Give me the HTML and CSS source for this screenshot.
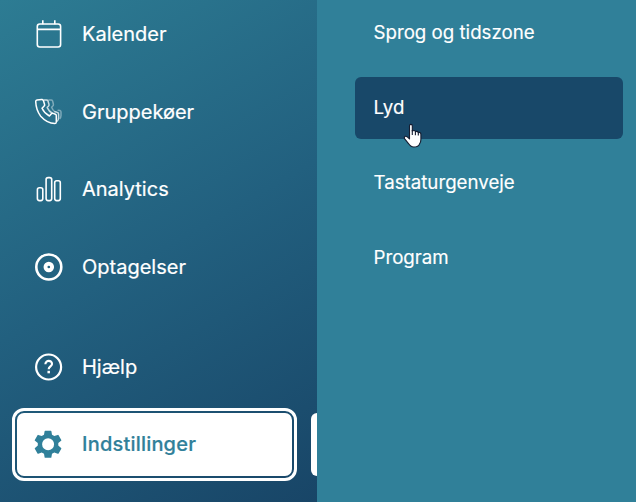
FILE: index.html
```html
<!DOCTYPE html>
<html lang="da">
<head>
<meta charset="utf-8">
<title>Indstillinger</title>
<link rel="stylesheet" href="styles.css">
</head>
<body>
<div class="app">
  <nav class="sidebar">
    <a class="nav-item">
      <svg class="icon" viewBox="0 0 30 30" fill="none" stroke="currentColor" stroke-width="1.6"><rect x="3.3" y="5" width="23.3" height="23" rx="2.5"/><path d="M3.3 10.4h23.3M8.8 1.2v4M20.8 1.2v4"/></svg>
      <span>Kalender</span>
    </a>
    <a class="nav-item">
      <svg class="icon" viewBox="0 0 30 30" fill="none" stroke="currentColor" stroke-width="1.5" stroke-linejoin="round">
        <path opacity=".4" d="M14.3 3H17.2Q18.2 3 18.6 4L19.4 7.3Q19.6 8.5 18.6 9.2L17.6 10.2Q18.8 13.3 21 14.8M23.6 13.2L26.2 13.6Q27 13.9 27 15V18.4Q26.9 21 25.6 22"/>
        <path opacity=".75" d="M9.8 3H12.4Q13.6 3 14 4L15 7.5Q15.2 8.6 14.4 9.3L13.2 10.6Q15 14.5 18.6 16.5M20.5 14.9Q21.4 14.7 23.4 15.4Q24.6 15.7 24.6 17V20.5Q24.5 23.4 23 24.4"/>
        <path d="M3 3L7.6 2.6Q8.9 2.5 9.4 3.6L10.6 7.4Q10.9 8.5 10 9.2L8 11.2Q10.4 16.4 15.4 19L17.4 16.8Q18.1 16 19.2 16.4L21.4 17.3Q22.3 17.7 22.3 18.8V25Q22.2 26.6 20.8 26.6Q13 26.2 6.7 19.2Q2 13 1.7 4.5Q1.7 3.2 3 3Z"/>
      </svg>
      <span>Gruppekøer</span>
    </a>
    <a class="nav-item">
      <svg class="icon" viewBox="0 0 30 30" fill="none" stroke="currentColor" stroke-width="1.6"><rect x="3.4" y="13.8" width="5.4" height="12.8" rx="2"/><rect x="12.1" y="3.6" width="5.6" height="23" rx="2"/><rect x="20.7" y="6.8" width="5.6" height="19.8" rx="2"/></svg>
      <span>Analytics</span>
    </a>
    <a class="nav-item">
      <svg class="icon" viewBox="0 0 30 30" fill="none" stroke="currentColor"><circle cx="14.8" cy="15" r="12.5" stroke-width="2.6"/><circle cx="14.8" cy="15" r="3.3" stroke-width="3.9"/></svg>
      <span>Optagelser</span>
    </a>
    <a class="nav-item nav-item-help">
      <svg class="icon" viewBox="0 0 30 30" fill="none" stroke="currentColor" stroke-width="2.2"><circle cx="14.6" cy="15" r="12.5"/><path stroke-width="2.2" d="M11.4 12.2C11.4 7.7 18.1 8 18 12C17.9 14.3 14.7 14.5 14.7 17.2"/><path stroke-width="2.5" d="M14.7 18.8v2.5"/></svg>
      <span>Hjælp</span>
    </a>
    <a class="nav-item nav-item-active">
      <svg class="icon" viewBox="0 0 30 30"><path fill="currentColor" fill-rule="evenodd" transform="translate(-.7 .1)" d="M11.9 1.7H17.6Q18 1.7 18.1 2.2L18.7 5.7L21 7L24.4 5.8Q25 5.6 25.3 6.1L28 10.8Q28.2 11.3 27.8 11.7L25 14V16.5L27.8 18.8Q28.2 19.2 28 19.7L25.3 24.4Q25 24.8 24.4 24.6L21 23.4L18.7 24.7L18.1 28.2Q18 28.7 17.6 28.7H11.9Q11.4 28.7 11.3 28.2L10.7 24.7L8.4 23.4L5 24.6Q4.5 24.8 4.2 24.4L1.5 19.7Q1.2 19.2 1.7 18.8L4.5 16.5V14L1.7 11.7Q1.2 11.3 1.5 10.8L4.2 6.1Q4.5 5.6 5 5.8L8.4 7L10.7 5.7L11.3 2.2Q11.4 1.7 11.9 1.7ZM14.8 9.2A6 6 0 1 0 14.8 21.2A6 6 0 1 0 14.8 9.2Z"/></svg>
      <span>Indstillinger</span>
    </a>
  </nav>
  <nav class="submenu">
    <a class="sub-item">Sprog og tidszone</a>
    <a class="sub-item sub-item-active">Lyd
      <svg class="cursor" viewBox="0 0 20 26"><path fill="#fff" stroke="#151c30" stroke-width="1.1" stroke-linejoin="round" d="M6.5 14.5V3Q6.5 1.4 7.9 1.4T9.3 3V8Q11.8 6.8 12.4 8.7Q14.6 7.8 15.3 9.5Q17.9 9 17.9 11.4V16.5Q17.9 19 16.6 20.8Q15.6 24 10.8 24Q7.4 24 5.5 20.6L1.5 15.6Q.8 14 2.2 13.3Q4 12.8 6.5 16Z"/><path stroke="#151c30" stroke-width="1.1" d="M9.3 7v5M12.4 8.2V12.3M15.3 9v3.5"/></svg>
    </a>
    <a class="sub-item">Tastaturgenveje</a>
    <a class="sub-item">Program</a>
  </nav>
</div>
</body>
</html>
```

FILE: styles.css
```css
* { box-sizing: border-box; }
body {
  margin: 0;
  font-family: Inter, "Liberation Sans", sans-serif;
  color: #fff;
}
.app {
  display: flex;
  width: 636px;
  height: 502px;
  overflow: hidden;
}
.sidebar {
  display: flex;
  flex-direction: column;
  gap: 14.6px;
  width: 317px;
  flex: none;
  padding: 2.6px 25px 0 17px;
  overflow: hidden;
  background: linear-gradient(150deg, #2d7c93 0%, #22607f 50%, #184567 100%);
}
.nav-item {
  position: relative;
  display: flex;
  align-items: center;
  gap: 18px;
  flex: none;
  height: 63px;
  padding-left: 17px;
  border-radius: 7px;
  font-size: 20px;
  font-weight: 400;
  -webkit-text-stroke: 0.2px currentColor;
}
.nav-item-help { margin-top: 22.4px; }
.nav-item-active {
  background: #fff;
  color: #30809a;
  font-weight: 500;
  letter-spacing: 0.2px;
  outline: 3px solid #fff;
  outline-offset: 2px;
}
.nav-item-active::after {
  content: "";
  position: absolute;
  left: 294px;
  top: 0;
  width: 12px;
  height: 63px;
  border-radius: 6px;
  background: #fff;
}
.icon {
  width: 30px;
  height: 30px;
  flex: none;
}
.submenu {
  display: flex;
  flex-direction: column;
  gap: 13px;
  flex: 1;
  padding: 2px 13px 0 38px;
  background: #308099;
}
.sub-item {
  position: relative;
  display: flex;
  align-items: center;
  height: 62px;
  flex: none;
  padding: 0 0 2px 18.5px;
  border-radius: 6px;
  font-size: 18.7px;
  font-weight: 400;
  -webkit-text-stroke: 0.15px currentColor;
}
.sub-item-active { background: #184869; }
.cursor {
  position: absolute;
  left: 48px;
  top: 46px;
  width: 20px;
  height: 26px;
}
```
